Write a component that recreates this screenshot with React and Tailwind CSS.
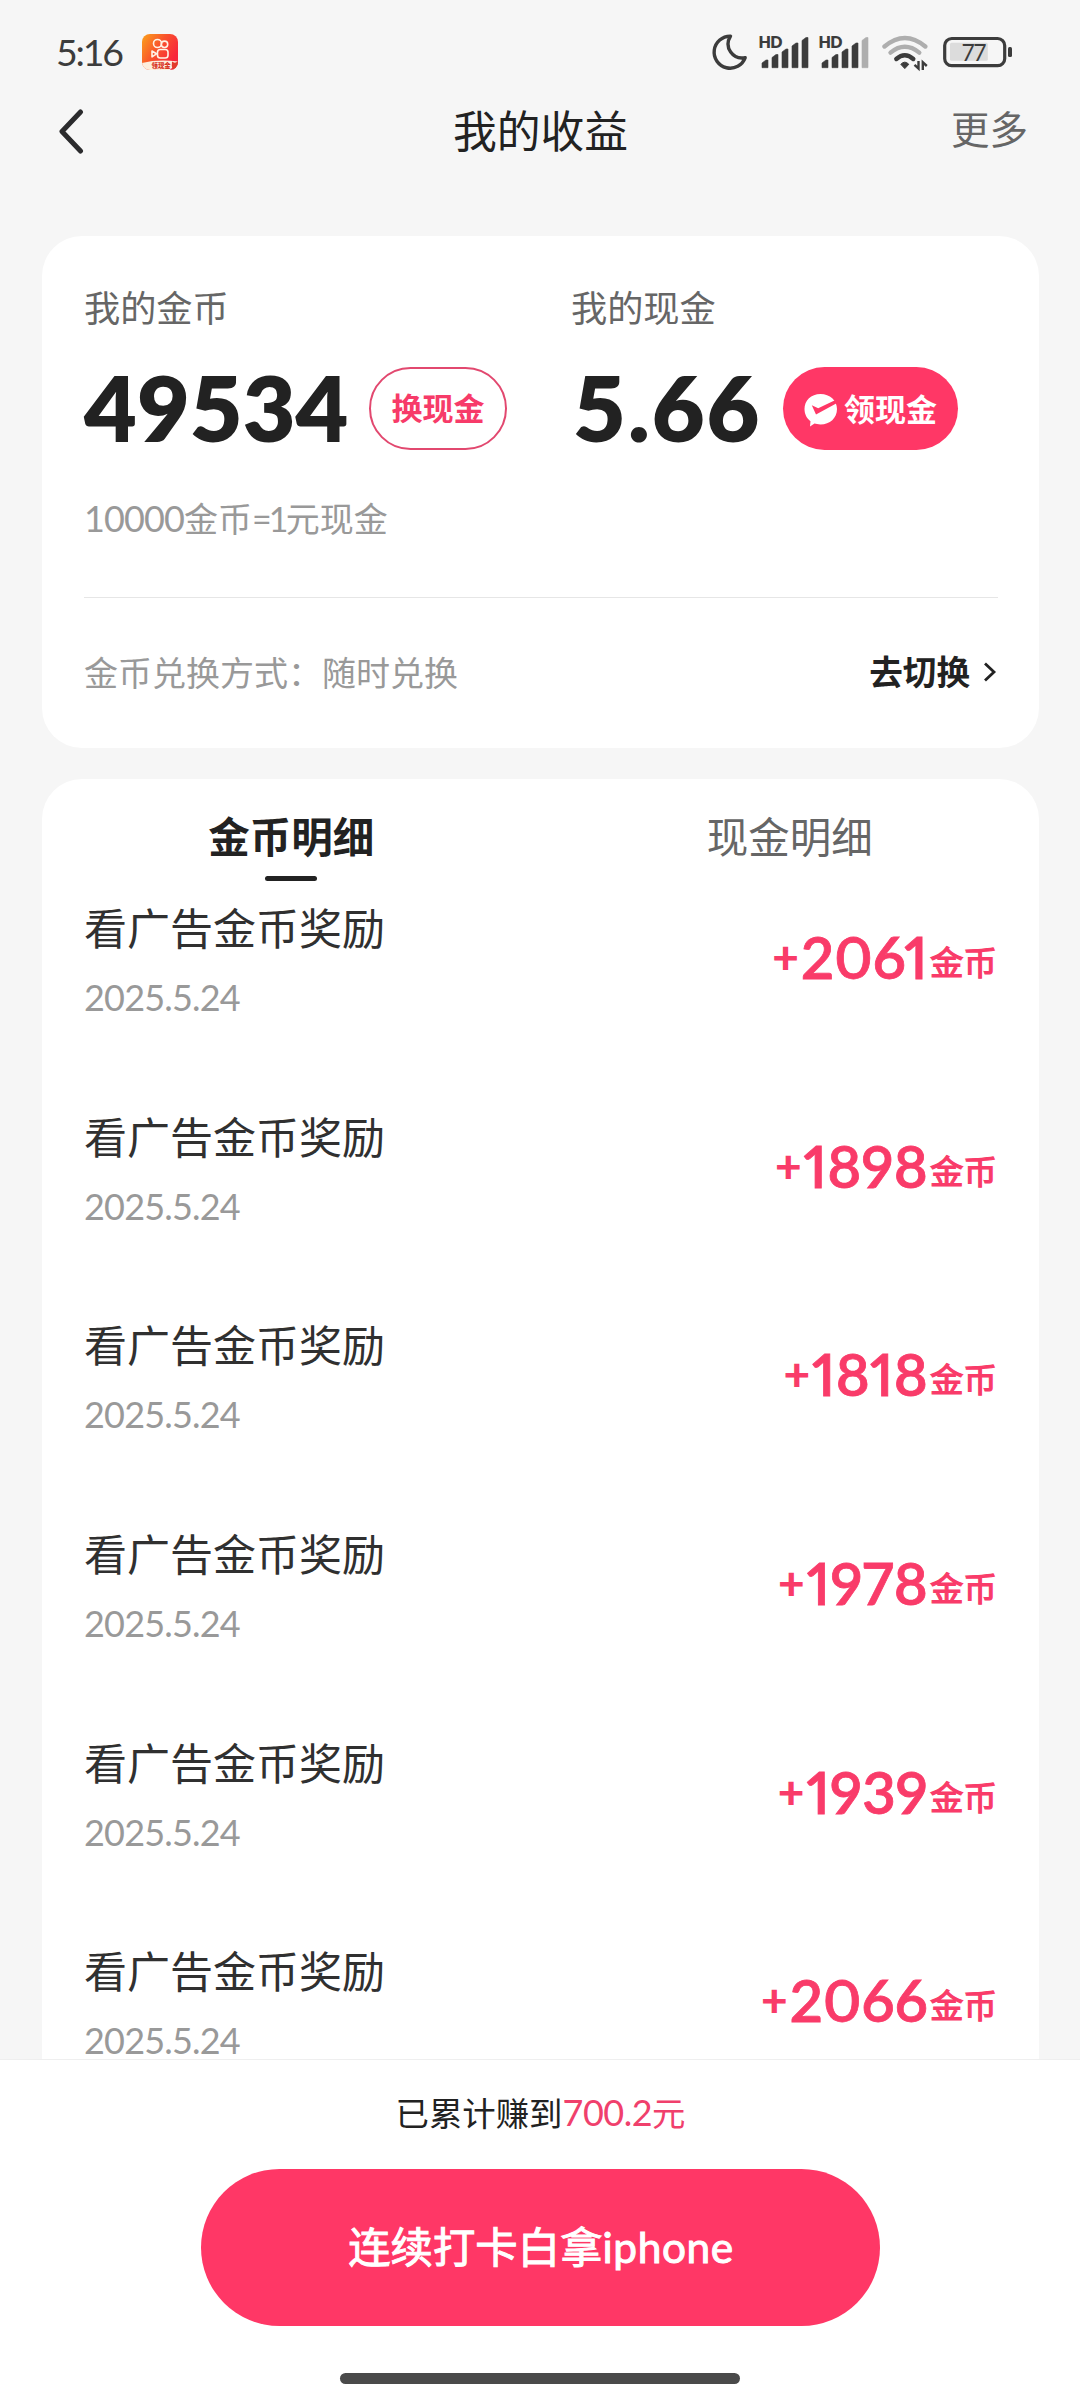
import { useState } from 'react';
import clsx from 'clsx';

const records = [
  { id: 1, title: '看广告金币奖励', date: '2025.5.24', amount: 2061 },
  { id: 2, title: '看广告金币奖励', date: '2025.5.24', amount: 1898 },
  { id: 3, title: '看广告金币奖励', date: '2025.5.24', amount: 1818 },
  { id: 4, title: '看广告金币奖励', date: '2025.5.24', amount: 1978 },
  { id: 5, title: '看广告金币奖励', date: '2025.5.24', amount: 1939 },
  { id: 6, title: '看广告金币奖励', date: '2025.5.24', amount: 2066 },
];

function AppBadge() {
  return (
    <svg className="h-9 w-9" viewBox="0 0 36 36" fill="none">
      <defs>
        <linearGradient id="badge" x1="0" y1="4" x2="32" y2="24" gradientUnits="userSpaceOnUse">
          <stop offset="0" stopColor="#fb9a1c" />
          <stop offset="0.5" stopColor="#f9532c" />
          <stop offset="1" stopColor="#f8263c" />
        </linearGradient>
        <clipPath id="badge-clip">
          <rect width="36" height="36" rx="8" />
        </clipPath>
      </defs>
      <g clipPath="url(#badge-clip)">
        <rect width="36" height="36" fill="url(#badge)" />
        <path d="M0 29 Q16 25 36 27.5 L28 36 H0 Z" fill="#fdeedd" />
        <path d="M31 36 Q29 32 30 27.5 Q33 30 36 27 V36 Z" fill="#e23a2c" />
      </g>
      <g stroke="#fff3e6" strokeWidth="1.6">
        <circle cx="15.5" cy="9.5" r="4" />
        <circle cx="22.5" cy="10.3" r="3.2" />
        <rect x="15.5" y="15.5" width="10.5" height="8.5" rx="2.8" />
        <path d="M10 17 L14.5 19.8 L10 22.8 Z" strokeLinejoin="round" />
      </g>
      <text x="9.5" y="34.3" fontSize="6.4" fontWeight="900" fill="#d8341f" fontFamily="Noto Sans CJK SC, sans-serif">领现金</text>
    </svg>
  );
}

function StatusIcons() {
  const bars = [
    { x: 0, top: 60 },
    { x: 10, top: 54.5 },
    { x: 20, top: 49 },
    { x: 30, top: 43 },
    { x: 40, top: 37.5 },
  ];
  const signal = (left, level) =>
    bars.map((b, i) => (
      <path
        key={b.x}
        d={`M${left + b.x} ${b.top + 3} L${left + b.x + 4} ${b.top} H${left + b.x + 6} V67.7 H${left + b.x} Z`}
        fill={i < level ? '#3c3c3c' : '#aeaeae'}
        stroke={i < level ? '#3c3c3c' : '#aeaeae'}
        strokeWidth="0.6"
        strokeLinejoin="round"
      />
    ));

  return (
    <svg className="h-10 w-[310px]" viewBox="710 32 310 40" fill="none">
      <path
        d="M730.5 36.2 A16 16 0 1 0 745.2 57.6 C733 60 723.5 47.5 730.5 36.2 Z"
        stroke="#3c3c3c"
        strokeWidth="3.4"
        strokeLinejoin="round"
      />
      <g fontFamily="Lato, sans-serif" fontSize="16" fontWeight="800" fill="#3c3c3c">
        <text x="758.5" y="47.8" textLength="24">HD</text>
        <text x="818.5" y="47.8" textLength="24">HD</text>
      </g>
      {signal(762, 5)}
      {signal(822, 4)}
      <g strokeWidth="4.4" strokeLinecap="round">
        <path d="M884.5 46.5 Q904.8 29.5 925.3 46.5" stroke="#aeaeae" />
        <path d="M890.5 52.6 Q904.8 40.8 919.3 52.6" stroke="#aeaeae" />
        <path d="M896.3 59 Q904.8 51.5 913.3 59" stroke="#3c3c3c" />
      </g>
      <path d="M900.8 64.3 Q904.8 60 908.8 64.3 L904.8 68.6 Z" fill="#3c3c3c" stroke="#3c3c3c" strokeLinejoin="round" />
      <path d="M918.5 61 V68.5 L914.5 64.8 M922.8 70 V62.3 L926.8 66" stroke="#3c3c3c" strokeWidth="2.4" />
      <rect x="944.7" y="38.5" width="60" height="27.2" rx="7" stroke="#3c3c3c" strokeWidth="3.2" />
      <rect x="950" y="42.8" width="37.8" height="18" rx="1.5" fill="#dcdcdc" />
      <rect x="1008" y="47" width="4" height="10" rx="1.5" fill="#3c3c3c" />
      <text x="961.5" y="60.7" fontFamily="Lato, sans-serif" fontSize="23" fill="#3c3c3c" textLength="25">77</text>
    </svg>
  );
}

function StatusBar() {
  return (
    <div className="flex h-[104px] items-center justify-between pr-[60px] pl-14">
      <div className="flex items-center gap-[18px]">
        <span className="w-[68px] text-[37.5px] leading-[48px] tracking-[-2.2px] text-[#3c3c3c]">5:16</span>
        <AppBadge />
      </div>
      <StatusIcons />
    </div>
  );
}

function Header() {
  return (
    <header className="grid h-[54px] grid-cols-3 items-center px-[52px]">
      <button aria-label="返回" className="ml-1.5 w-fit">
        <svg className="h-[46px] w-7" viewBox="0 0 28 46" fill="none">
          <path d="M22.5 4 L4 23.5 L22.5 43" stroke="#2b2b2d" strokeWidth="5" strokeLinecap="round" strokeLinejoin="round" />
        </svg>
      </button>
      <h1 className="pl-px text-center text-[43.8px] leading-[54px] whitespace-nowrap text-[#222]">我的收益</h1>
      <button className="pb-[3px] text-right text-[38.5px] leading-[51px] text-[#666]">更多</button>
    </header>
  );
}

function CheckBubble() {
  return (
    <svg className="h-[34px] w-[34px]" viewBox="0 0 34 34">
      <path d="M16.5 1 C26 1 33 7.5 33 16 C33 25 26 31.5 16.5 31.5 C14 31.5 12 31 10.5 30.6 L6 33.5 L6.5 28.2 C2.7 25.5 0.5 21 0.5 16 C0.5 7.5 7 1 16.5 1 Z" fill="#fff" />
      <path d="M7.8 12.3 L12 21.5 L34 9.6 L32 6.8 L14.2 15.2 Z" fill="#ff3766" />
    </svg>
  );
}

function BalanceCard() {
  return (
    <section className="mr-[41px] ml-[42px] mt-[78px] h-[512px] rounded-[40px] bg-white pt-[48px] pr-[41px] pl-[42px]">
      <div className="grid grid-cols-[487px_1fr]">
        <div>
          <p className="text-[36.2px] leading-[48px] text-[#666]">我的金币</p>
          <div className="mt-[35px] flex h-[83px] items-center">
            <span className="w-[285px] pb-[3px] text-[91.2px] leading-[78px] font-extrabold text-[#222]">49534</span>
            <button className="h-[83px] w-[138px] rounded-full border-2 border-[#e2486f] text-[31px] font-bold text-[#f73b69]">换现金</button>
          </div>
        </div>
        <div>
          <p className="text-[36.2px] leading-[48px] text-[#666]">我的现金</p>
          <div className="mt-[35px] flex h-[83px] items-center">
            <span className="w-[212px] pb-[3px] pl-0.5 text-[91.2px] leading-[78px] font-extrabold tracking-[2px] text-[#222]">5.66</span>
            <button className="flex h-[83px] w-[175px] items-center justify-center gap-1.5 rounded-full bg-[#ff3766] pt-0.5 text-[31px] font-bold text-white">
              <CheckBubble />
              领现金
            </button>
          </div>
        </div>
      </div>
      <p className="mt-[44px] text-[34px] leading-[48px] text-[#999]">
        <span className="text-[36px] tracking-[-0.9px]">10000</span>金币<span className="tracking-[-2.8px]">=1</span>元现金
      </p>
      <div className="mt-[54px] h-px bg-[#e6e6e6]" />
      <div className="flex h-[148px] items-center justify-between">
        <span className="text-[34px] text-[#999]">金币兑换方式：随时兑换</span>
        <button className="flex items-center gap-3 text-[33.6px] font-bold text-[#222]">
          去切换
          <svg className="h-6 w-4" viewBox="0 0 16 24" fill="none">
            <path d="M3 3.5 L12 12 L3 20.5" stroke="#222" strokeWidth="2.8" />
          </svg>
        </button>
      </div>
    </section>
  );
}

function Tab({ active, onClick, children }) {
  return (
    <button
      onClick={onClick}
      className={clsx(
        'flex h-full flex-1 flex-col items-center pt-[31px] text-[41.5px] leading-[54px]',
        active ? 'font-bold text-[#222]' : 'text-[#666]'
      )}
    >
      {children}
      {active && <span className="mt-3 h-[5px] w-[52px] rounded-full bg-[#222]" />}
    </button>
  );
}

function RecordRow({ record }) {
  return (
    <li className="flex h-[208.7px] shrink-0 justify-between last:h-[136px]">
      <div>
        <p className="text-[43px] leading-[54px] text-[#303030]">{record.title}</p>
        <p className="mt-[24px] text-[36px] leading-[34px] tracking-[-0.8px] text-[#999]">{record.date}</p>
      </div>
      <p className="flex pt-[25px] leading-[60px] font-semibold text-[#f93b69]">
        <span className="pr-0.5 text-[46px] font-black">+</span>
        <span className="text-[58px] tracking-[0.2px] proportional-nums [-webkit-text-stroke:0.8px_#f93b69]">{record.amount}</span>
        <span className="ml-0.5 pt-[5px] text-[33.5px] font-normal [-webkit-text-stroke:1.2px_#f93b69]">金币</span>
      </p>
    </li>
  );
}

function RecordsCard() {
  const [tab, setTab] = useState('coin');

  return (
    <section className="mr-[41px] ml-[42px] mt-[31px] flex h-[1280px] flex-col rounded-t-[40px] bg-white">
      <div className="flex h-[123px] shrink-0">
        <Tab active={tab === 'coin'} onClick={() => setTab('coin')}>金币明细</Tab>
        <Tab active={tab === 'cash'} onClick={() => setTab('cash')}>现金明细</Tab>
      </div>
      <ul className="flex flex-col px-[42px]">
        {records.map((record) => (
          <RecordRow key={record.id} record={record} />
        ))}
      </ul>
    </section>
  );
}

function BottomBar() {
  return (
    <footer className="flex h-[341px] flex-col items-center border-t border-[#efefef] bg-white pt-[28px]">
      <p className="pl-px text-[33.4px] leading-[48px] text-[#222]">
        已累计赚到<span className="text-[#f0406c]"><span className="text-[36px] tracking-[-0.5px]">700.2</span>元</span>
      </p>
      <button className="mt-8 h-[157px] w-[679px] rounded-full bg-[#ff3766] pb-0.5 pl-0.5 text-[42.4px] text-white [-webkit-text-stroke:1px_white]">
        连续打卡白拿<span className="tracking-[0.6px]">iphone</span>
      </button>
      <div className="mt-[47px] h-[11px] w-[400px] rounded-full bg-[#4a4a4a]" />
    </footer>
  );
}

function App() {
  return (
    <div className="h-[2400px] w-[1080px] overflow-hidden bg-[#f6f6f6] font-['Lato','Noto_Sans_CJK_SC',sans-serif]">
      <StatusBar />
      <Header />
      <BalanceCard />
      <RecordsCard />
      <BottomBar />
    </div>
  );
}

export default App;
